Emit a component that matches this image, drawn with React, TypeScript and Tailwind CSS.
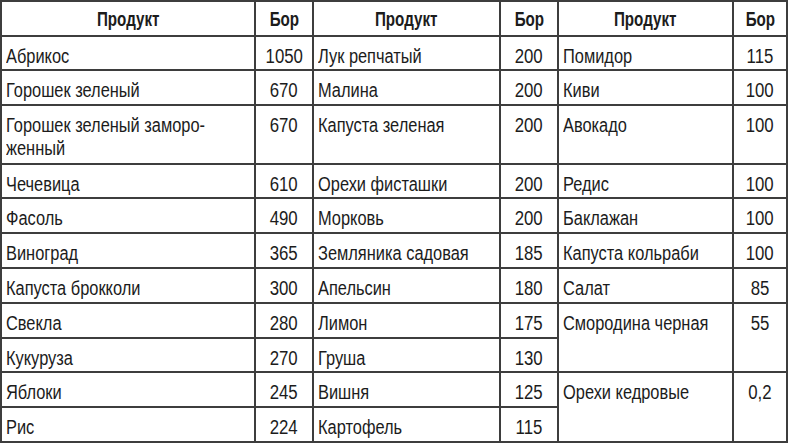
import React from 'react'

type Cell = { name: string; value: string; span?: boolean }

// rows of the table: left / middle / right groups
const rows: (Cell | null)[][] = [
  [{ name: 'Абрикос', value: '1050' }, { name: 'Лук репчатый', value: '200' }, { name: 'Помидор', value: '115' }],
  [{ name: 'Горошек зеленый', value: '670' }, { name: 'Малина', value: '200' }, { name: 'Киви', value: '100' }],
  [{ name: 'Горошек зеленый заморо-\nженный', value: '670' }, { name: 'Капуста зеленая', value: '200' }, { name: 'Авокадо', value: '100' }],
  [{ name: 'Чечевица', value: '610' }, { name: 'Орехи фисташки', value: '200' }, { name: 'Редис', value: '100' }],
  [{ name: 'Фасоль', value: '490' }, { name: 'Морковь', value: '200' }, { name: 'Баклажан', value: '100' }],
  [{ name: 'Виноград', value: '365' }, { name: 'Земляника садовая', value: '185' }, { name: 'Капуста кольраби', value: '100' }],
  [{ name: 'Капуста брокколи', value: '300' }, { name: 'Апельсин', value: '180' }, { name: 'Салат', value: '85' }],
  [{ name: 'Свекла', value: '280' }, { name: 'Лимон', value: '175' }, { name: 'Смородина черная', value: '55', span: true }],
  [{ name: 'Кукуруза', value: '270' }, { name: 'Груша', value: '130' }, null],
  [{ name: 'Яблоки', value: '245' }, { name: 'Вишня', value: '125' }, { name: 'Орехи кедровые', value: '0,2', span: true }],
  [{ name: 'Рис', value: '224' }, { name: 'Картофель', value: '115' }, null],
]

export default function App() {
  return (
    <div className="w-[790px] h-[443px] bg-white">
      <div
        className="grid w-[788px] gap-[2px] p-[2px] bg-[#3d3d3d] text-[#1c1c1c] text-[20px] leading-[23px] grid-cols-[252px_56px_185px_56px_173px_52px] grid-rows-[32.5px_32.8px_32.8px_56.5px_32.8px_32.8px_32.8px_32.8px_32.8px_32.8px_32.8px_32.8px]"
        style={{ fontFamily: '"Liberation Sans", Arial, sans-serif' }}
      >
        {[0, 1, 2].map((g) => (
          <React.Fragment key={'h' + g}>
            <div className="bg-white pt-[6px] text-center font-bold whitespace-nowrap">
              <span className="inline-block origin-center scale-x-[0.76]">Продукт</span>
            </div>
            <div className="bg-white pt-[6px] text-center font-bold whitespace-nowrap">
              <span className="inline-block origin-center scale-x-[0.76]">Бор</span>
            </div>
          </React.Fragment>
        ))}
        {rows.map((row, i) =>
          row.map((c, g) =>
            c ? (
              <React.Fragment key={i + '-' + g}>
                <div className={'bg-white pt-[8px] pl-[4px] whitespace-pre overflow-visible' + (c.span ? ' row-span-2' : '')}>
                  <span className="inline-block origin-left scale-x-[0.82]">{c.name}</span>
                </div>
                <div className={'bg-white pt-[8px] text-center whitespace-nowrap' + (c.span ? ' row-span-2' : '')}>
                  <span className="inline-block origin-center scale-x-[0.84]">{c.value}</span>
                </div>
              </React.Fragment>
            ) : null
          )
        )}
      </div>
    </div>
  )
}
